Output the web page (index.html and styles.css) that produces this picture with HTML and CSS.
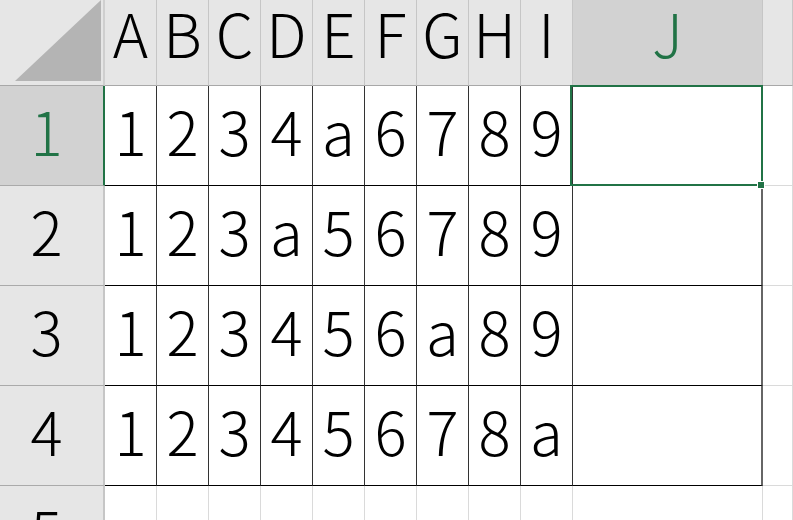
FILE: index.html
```html
<!DOCTYPE html>
<html lang="ja">
<head>
    <meta charset="UTF-8">
    <title>Sheet1</title>
    <link rel="stylesheet" href="styles.css">
</head>
<body>
    <div class="sheet">
        <!-- column headers -->
        <div class="corner"><div class="corner-tri"></div></div>
        <div class="col-head">A</div>
        <div class="col-head">B</div>
        <div class="col-head">C</div>
        <div class="col-head">D</div>
        <div class="col-head">E</div>
        <div class="col-head">F</div>
        <div class="col-head">G</div>
        <div class="col-head">H</div>
        <div class="col-head">I</div>
        <div class="col-head active">J</div>
        <div class="col-head blank"></div>

        <!-- row 1 -->
        <div class="row-head active">1</div>
        <div class="cell">1</div>
        <div class="cell">2</div>
        <div class="cell">3</div>
        <div class="cell">4</div>
        <div class="cell">a</div>
        <div class="cell">6</div>
        <div class="cell">7</div>
        <div class="cell">8</div>
        <div class="cell">9</div>
        <div class="cell wide selected"></div>
        <div class="cell empty"></div>

        <!-- row 2 -->
        <div class="row-head">2</div>
        <div class="cell">1</div>
        <div class="cell">2</div>
        <div class="cell">3</div>
        <div class="cell">a</div>
        <div class="cell">5</div>
        <div class="cell">6</div>
        <div class="cell">7</div>
        <div class="cell">8</div>
        <div class="cell">9</div>
        <div class="cell wide"></div>
        <div class="cell empty"></div>

        <!-- row 3 -->
        <div class="row-head">3</div>
        <div class="cell">1</div>
        <div class="cell">2</div>
        <div class="cell">3</div>
        <div class="cell">4</div>
        <div class="cell">5</div>
        <div class="cell">6</div>
        <div class="cell">a</div>
        <div class="cell">8</div>
        <div class="cell">9</div>
        <div class="cell wide"></div>
        <div class="cell empty"></div>

        <!-- row 4 -->
        <div class="row-head">4</div>
        <div class="cell">1</div>
        <div class="cell">2</div>
        <div class="cell">3</div>
        <div class="cell">4</div>
        <div class="cell">5</div>
        <div class="cell">6</div>
        <div class="cell">7</div>
        <div class="cell">8</div>
        <div class="cell">a</div>
        <div class="cell wide"></div>
        <div class="cell empty"></div>

        <!-- row 5 -->
        <div class="row-head">5</div>
        <div class="cell empty"></div>
        <div class="cell empty"></div>
        <div class="cell empty"></div>
        <div class="cell empty"></div>
        <div class="cell empty"></div>
        <div class="cell empty"></div>
        <div class="cell empty"></div>
        <div class="cell empty"></div>
        <div class="cell empty"></div>
        <div class="cell empty"></div>
        <div class="cell empty"></div>
    </div>
</body>
</html>
```

FILE: styles.css
```css
body {
    margin: 0;
    overflow: hidden;
    background: #fff;
    font-family: "Noto Sans CJK JP", "Noto Sans", sans-serif;
}

.sheet {
    display: grid;
    grid-template-columns: 105px repeat(9, 52px) 190px 1fr;
    grid-template-rows: 86px repeat(5, 100px);
    width: 793px;
    height: 520px;
    overflow: hidden;
}

.sheet > div {
    box-sizing: border-box;
    display: flex;
    align-items: center;
    justify-content: center;
    font-size: 60px;
    font-weight: 300;
    line-height: 1.2;
    color: #000;
}

/* Header area */
.corner {
    position: relative;
    background: #e6e6e6;
    border-right: 2px solid #cfcfcf;
    border-bottom: 1px solid #a8a8a8;
}

.corner-tri {
    position: absolute;
    left: 15px;
    right: 2px;
    top: 0;
    bottom: 4px;
    background: #b4b4b4;
    clip-path: polygon(100% 0, 100% 100%, 0 100%);
}

.col-head {
    background: #e6e6e6;
    border-right: 1px solid #c6c6c6;
    border-bottom: 1px solid #a8a8a8;
    padding-bottom: 22px;
}

.col-head.active {
    background: #d2d2d2;
    color: #217346 !important;
}

.row-head {
    background: #e6e6e6;
    border-right: 2px solid #c6c6c6;
    border-bottom: 1px solid #aaaaaa;
    padding-right: 10px;
    padding-bottom: 11px;
}

.row-head.active {
    background: #d2d2d2;
    color: #217346 !important;
    border-right-color: #217346;
}

/* Cells */
.cell {
    background: #fff;
    border-right: 1px solid #333;
    border-bottom: 1px solid #000;
    padding-bottom: 11px;
}

.cell.wide {
    border-right: 2px solid #666;
}

.cell.empty {
    border-right: 1px solid #dadada;
    border-bottom: 1px solid #dadada;
}

.cell.selected {
    position: relative;
}

.cell.selected::before {
    content: "";
    position: absolute;
    left: -3px;
    top: -1px;
    right: -2px;
    bottom: -1px;
    border: 2px solid #217346;
}

.cell.selected::after {
    content: "";
    position: absolute;
    right: -4px;
    bottom: -4px;
    width: 6px;
    height: 6px;
    background: #217346;
    border: 1px solid #fff;
}
```
